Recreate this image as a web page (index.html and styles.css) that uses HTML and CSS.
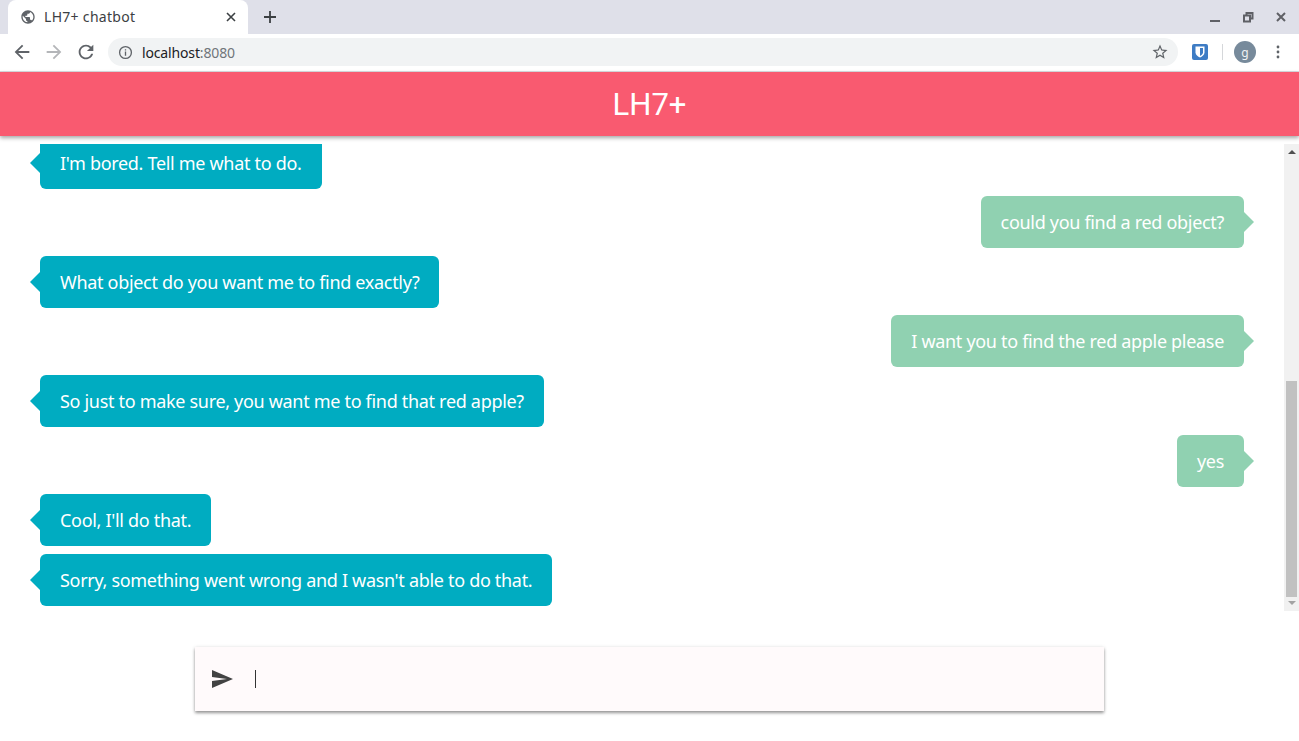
FILE: index.html
```html
<!DOCTYPE html>
<html lang="en">
<head>
<meta charset="utf-8">
<title>LH7+ chatbot</title>
<link rel="stylesheet" href="styles.css">
</head>
<body>
<div class="browser">
  <div class="tabstrip">
    <div class="tab">
      <svg class="favicon" viewBox="0 0 24 24"><path d="M12 2C6.48 2 2 6.48 2 12s4.48 10 10 10 10-4.48 10-10S17.52 2 12 2zm-1 17.93c-3.95-.49-7-3.85-7-7.93 0-.62.08-1.21.21-1.79L9 15v1c0 1.1.9 2 2 2v1.93zm6.9-2.54c-.26-.81-1-1.39-1.9-1.39h-1v-3c0-.55-.45-1-1-1H8v-2h2c.55 0 1-.45 1-1V7h2c1.1 0 2-.9 2-2v-.41c2.93 1.19 5 4.06 5 7.41 0 2.08-.8 3.97-2.1 5.39z"/></svg>
      <span class="tab-title">LH7+ chatbot</span>
      <svg class="tab-close" viewBox="0 0 10 10"><path d="M1 1l8 8M9 1l-8 8"/></svg>
    </div>
    <svg class="new-tab" viewBox="0 0 12 12"><path d="M6 0v12M0 6h12"/></svg>
    <div class="window-controls">
      <svg class="win-icon" viewBox="0 0 12 12"><path d="M1 10h10"/></svg>
      <svg class="win-icon" viewBox="0 0 12 12"><path d="M2 4.500h6v6H2zM4.500 4V2h6v5.500H8.500"/></svg>
      <svg class="win-icon" viewBox="0 0 12 12"><path d="M2 2l8 8M10 2l-8 8"/></svg>
    </div>
  </div>
  <div class="toolbar">
    <svg class="nav-icon" viewBox="0 0 24 24"><path class="nav-dark" d="M20 11H7.830l5.590-5.590L12 4l-8 8 8 8 1.410-1.410L7.830 13H20z"/></svg>
    <svg class="nav-icon" viewBox="0 0 24 24"><path class="nav-muted" d="M4 11h12.170l-5.590-5.590L12 4l8 8-8 8-1.410-1.410L16.170 13H4z"/></svg>
    <svg class="nav-icon" viewBox="0 0 24 24"><path class="nav-dark" d="M17.650 6.350A7.958 7.958 0 0 0 12 4c-4.420 0-7.990 3.580-7.990 8s3.570 8 7.990 8c3.730 0 6.840-2.550 7.730-6h-2.080A5.990 5.990 0 0 1 12 18c-3.310 0-6-2.690-6-6s2.690-6 6-6c1.660 0 3.140.69 4.220 1.780L13 11h7V4l-2.350 2.350z"/></svg>
    <div class="omnibox">
      <svg class="info" viewBox="0 0 16 16"><circle cx="8" cy="8" r="6.300"/><path d="M8 7v4.500M8 4.400v1.400"/></svg>
      <span class="url">localhost<span class="url-port">:8080</span></span>
      <svg class="star" viewBox="0 0 24 24"><path d="M22 9.240l-7.190-.62L12 2 9.190 8.630 2 9.240l5.460 4.730L5.820 21 12 17.270 18.180 21l-1.630-7.030L22 9.240zM12 15.400l-3.760 2.270 1-4.280-3.320-2.880 4.380-.38L12 6.100l1.710 4.040 4.380.38-3.320 2.880 1 4.280L12 15.400z"/></svg>
    </div>
    <svg class="bitwarden" viewBox="0 0 16 16"><rect width="16" height="16" rx="2"/><path d="M3.500 2.500h9v6c0 2.500-2.500 4-4.500 5-2-1-4.500-2.500-4.500-5z"/><path class="bw-inner" d="M8 4v8c1.500-.8 3-2 3-3.500V4z"/></svg>
    <div class="tool-sep"></div>
    <div class="avatar">g</div>
    <svg class="menu" viewBox="0 0 4 16"><circle cx="2" cy="3" r="1.400"/><circle cx="2" cy="8" r="1.400"/><circle cx="2" cy="13" r="1.400"/></svg>
  </div>
</div>
<header class="app-header">LH7+</header>
<main class="chat-wrap">
  <div class="messages">
    <div class="msg bot">I'm bored. Tell me what to do.</div>
    <div class="msg user">could you find a red object?</div>
    <div class="msg bot">What object do you want me to find exactly?</div>
    <div class="msg user">I want you to find the red apple please</div>
    <div class="msg bot">So just to make sure, you want me to find that red apple?</div>
    <div class="msg user">yes</div>
    <div class="msg bot">Cool, I'll do that.</div>
    <div class="msg bot">Sorry, something went wrong and I wasn't able to do that.</div>
  </div>
  <div class="scrollbar">
    <div class="arrow-up"></div>
    <div class="track"><div class="thumb"></div></div>
    <div class="arrow-down"></div>
  </div>
</main>
<div class="composer">
  <svg class="send" viewBox="0 0 24 24"><path d="M2.010 21L23 12 2.010 3 2 10l15 2-15 2z"/></svg>
  <div class="caret"></div>
</div>
</body>
</html>
```
FILE: styles.css
```css
* { box-sizing: border-box; }
html, body { margin: 0; height: 741px; overflow: hidden; background: #fff; }
body { font-family: "Noto Sans", "Open Sans", sans-serif; }

.browser { height: 72px; display: flex; flex-direction: column; }
.tabstrip { height: 34px; background: #dfe0e9; display: flex; align-items: center; padding-left: 8px; padding-right: 12px; }
.tab { width: 240px; height: 34px; background: #fff; border-radius: 8px 8px 0 0; display: flex; align-items: center; padding: 0 10px 0 12px; }
.favicon { width: 16px; height: 16px; fill: #5f6368; flex: none; }
.tab-title { flex: 1; margin-left: 8px; padding-bottom: 2px; font-size: 14px; letter-spacing: .3px; color: #3c4043; white-space: nowrap; }
.tab-close { width: 10px; height: 10px; fill: none; stroke: #3c4043; stroke-width: 1.600; margin-right: 2px; }
.new-tab { width: 12px; height: 12px; margin-left: 16px; fill: none; stroke: #3c4043; stroke-width: 1.800; }
.window-controls { margin-left: auto; display: flex; gap: 21px; }
.win-icon { width: 12px; height: 12px; fill: none; stroke: #5f6066; stroke-width: 2; }

.toolbar { height: 38px; background: #fff; border-bottom: 1px solid #dadce0; display: flex; align-items: center; padding: 0 16px 1px 11px; }
.nav-icon { width: 22px; height: 22px; margin-right: 10px; flex: none; }
.nav-dark { fill: #5f6368; }
.nav-muted { fill: #b4b6b9; }
.omnibox { width: 1070px; height: 28px; margin-left: 1px; background: #f1f3f4; border-radius: 14px; display: flex; align-items: center; padding: 0 9px 0 10px; }
.info { width: 15px; height: 15px; fill: none; stroke: #5f6368; stroke-width: 1.400; flex: none; }
.url { margin-left: 9px; font-size: 14px; letter-spacing: -.15px; color: #202124; flex: 1; }
.url-port { color: #70757a; }
.star { width: 18px; height: 18px; fill: #5f6368; }
.bitwarden { width: 16px; height: 16px; margin-left: 14px; fill: #3e7cc4; flex: none; }
.bitwarden path { fill: #fff; }
.bitwarden .bw-inner { fill: #3e7cc4; }
.tool-sep { width: 1px; height: 16px; background: #d5d7da; margin-left: 14px; }
.avatar { width: 22px; height: 22px; margin-left: 11px; border-radius: 50%; background: #778a9b; color: #f0f2f4; font-size: 12px; display: flex; align-items: center; justify-content: center; }
.menu { width: 4px; height: 16px; margin-left: 20px; fill: #5f6368; flex: none; }

.app-header { height: 64px; padding-top: 1px; background: #f95a70; color: #fff; font-family: Roboto, sans-serif; font-size: 31px; display: flex; align-items: center; justify-content: center; box-shadow: 0 2px 4px rgba(0,0,0,.35); position: relative; }

.chat-wrap { height: 467px; margin-top: 8px; display: flex; }
.messages { flex: 1; height: 467px; overflow: hidden; display: flex; flex-direction: column; justify-content: flex-end; gap: 7.670px; padding: 0 40px 5px; }
.msg { position: relative; height: 52px; flex: none; display: flex; align-items: center; padding: 0 20px; border-radius: 6px; color: #fff; font-size: 18px; letter-spacing: -.31px; white-space: nowrap; width: fit-content; }
.msg:first-child { margin-bottom: -.5px; }
.msg::after { content: ""; position: absolute; top: 16px; border: 10px solid transparent; }
.bot { background: #00acc1; align-self: flex-start; }
.bot::after { left: -19px; border-left-width: 9px; border-right: 10px solid #00acc1; border-left-color: transparent; }
.user { background: #90d1b1; align-self: flex-end; }
.user::after { right: -19px; border-right-width: 9px; border-left: 10px solid #90d1b1; }

.scrollbar { width: 15px; height: 467px; background: #f1f1f1; display: flex; flex-direction: column; align-items: center; }
.arrow-up { width: 0; height: 0; margin-top: 6px; border: 4px solid transparent; border-top: 0; border-bottom: 4px solid #505050; }
.track { flex: 1; width: 100%; padding: 227px 2px 0; }
.thumb { height: 216px; background: #c1c1c1; }
.arrow-down { width: 0; height: 0; margin-bottom: 6px; border: 4px solid transparent; border-bottom: 0; border-top: 4px solid #a3a3a3; }

.composer { width: 909px; height: 64px; margin: 36px auto 0; background: #fffafb; display: flex; align-items: center; padding-left: 15px; box-shadow: 0 2px 3px rgba(0,0,0,.4), 0 0 4px rgba(0,0,0,.08); }
.send { width: 24px; height: 24px; fill: #424242; flex: none; }
.caret { width: 1px; height: 18px; margin-left: 21px; background: #333; }
```
